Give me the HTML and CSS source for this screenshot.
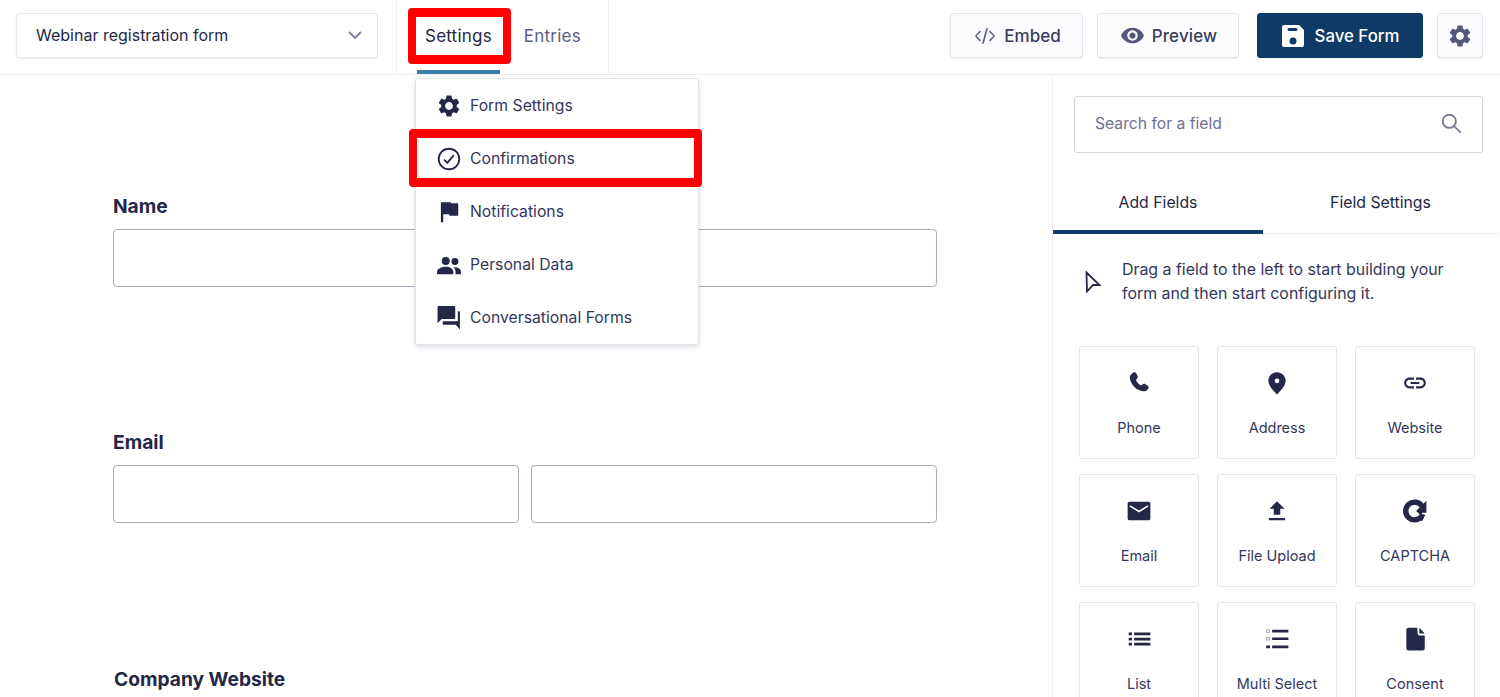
FILE: index.html
```html
<!DOCTYPE html>
<html lang="en">
<head>
<meta charset="utf-8">
<title>Webinar registration form</title>
<link rel="stylesheet" href="styles.css">
</head>
<body>
<svg class="defs" width="0" height="0" aria-hidden="true">
  <symbol id="gear" viewBox="0 0 24 24"><path d="M19.14 12.94c.04-.3.06-.61.06-.94 0-.32-.02-.64-.07-.94l2.03-1.58a.49.49 0 0 0 .12-.61l-1.92-3.32a.488.488 0 0 0-.59-.22l-2.39.96c-.5-.38-1.03-.7-1.62-.94l-.36-2.54a.484.484 0 0 0-.48-.41h-3.84c-.24 0-.43.17-.47.41l-.36 2.54c-.59.24-1.13.57-1.62.94l-2.39-.96c-.22-.08-.47 0-.59.22L2.74 8.87c-.12.21-.08.47.12.61l2.03 1.58c-.05.3-.09.63-.09.94s.02.64.07.94l-2.03 1.58a.49.49 0 0 0-.12.61l1.92 3.32c.12.22.37.29.59.22l2.39-.96c.5.38 1.03.7 1.62.94l.36 2.54c.05.24.24.41.48.41h3.84c.24 0 .44-.17.47-.41l.36-2.54c.59-.24 1.13-.56 1.62-.94l2.39.96c.22.08.47 0 .59-.22l1.92-3.32c.12-.22.07-.47-.12-.61l-2.01-1.58zM12 15.6c-1.98 0-3.6-1.62-3.6-3.6s1.62-3.6 3.6-3.6 3.6 1.62 3.6 3.6-1.62 3.6-3.6 3.6z"/></symbol>
</svg>
<header class="topbar">
  <div class="form-select"><span>Webinar registration form</span>
    <svg class="chev" viewBox="0 0 14 8"><path d="M1 1l6 6 6-6"/></svg>
  </div>
  <nav class="tabs">
    <a class="tab active">Settings</a>
    <a class="tab">Entries</a>
  </nav>
  <div class="actions">
    <button class="btn btn-embed"><svg class="ic-code" viewBox="0 0 24 24"><path d="M7.6 16.6 3 12l4.6-4.6L6.4 6 1 12l5.4 6zm8.800 0L21 12l-4.600-4.600L17.600 6 23 12l-5.400 6zM13.300 3.500h1.900L10.700 20.500H8.800z"/></svg>Embed</button>
    <button class="btn btn-preview"><svg class="ic-eye" viewBox="0 0 24 24"><path d="M12 4.500C7 4.500 2.730 7.610 1 12c1.730 4.390 6 7.500 11 7.500s9.270-3.110 11-7.500c-1.730-4.390-6-7.500-11-7.500zM12 17c-2.760 0-5-2.240-5-5s2.240-5 5-5 5 2.240 5 5-2.240 5-5 5zm0-8c-1.660 0-3 1.340-3 3s1.340 3 3 3 3-1.340 3-3-1.340-3-3-3z"/></svg>Preview</button>
    <button class="btn btn-save"><svg class="ic-save" viewBox="0 0 24 24"><path fill-rule="evenodd" d="M5 1h13l5 5v15a2 2 0 0 1-2 2H3a2 2 0 0 1-2-2V3a2 2 0 0 1 2-2zm3 3a1.500 1.500 0 0 0 0 3h7a1.500 1.500 0 0 0 0-3zm4 9.500a3.500 3.500 0 1 0 0 7 3.500 3.500 0 0 0 0-7z"/></svg>Save Form</button>
    <button class="btn btn-gear"><svg class="ic-gear"><use href="#gear"/></svg></button>
  </div>
</header>

<main class="layout">
  <section class="canvas">
    <div class="field field-name">
      <label class="field-label">Name</label>
      <div class="inputs"><div class="input"></div></div>
    </div>
    <div class="field field-email">
      <label class="field-label">Email</label>
      <div class="inputs"><div class="input"></div><div class="input"></div></div>
    </div>
    <div class="field field-web">
      <label class="field-label">Company Website</label>
    </div>
  </section>

  <aside class="sidebar">
    <div class="search"><span>Search for a field</span>
      <svg class="ic-search" viewBox="0 0 24 24"><circle cx="9.500" cy="9.500" r="7.500"/><path d="M15 15l7.500 7.500"/></svg>
    </div>
    <div class="side-tabs">
      <a class="side-tab active">Add Fields</a>
      <a class="side-tab">Field Settings</a>
    </div>
    <div class="hint">
      <svg class="ic-cursor" viewBox="0 0 16 22"><path d="M1.500 1.500L14.500 14H8L2 20.500z"/></svg>
      <p>Drag a field to the left to start building your form and then start configuring it.</p>
    </div>
    <div class="cards">
      <div class="card"><svg viewBox="0 0 24 24"><path d="M6.500 2.500c1-.8 2.300-.5 2.900.6l1.200 2.200c.5 1 .3 2-.5 2.700l-1 .9c.9 2.300 2.700 4.300 5 5.500l1.100-1c.8-.7 1.800-.8 2.700-.2l2.100 1.300c1 .7 1.200 2 .4 2.900l-.9 1c-1 1.100-2.400 1.500-3.800 1.100C9.500 18.900 4.900 14 3.600 7.800c-.3-1.400.1-2.800 1.200-3.800z"/></svg><span>Phone</span></div>
      <div class="card"><svg viewBox="0 0 24 24"><path d="M12 2C7.600 2 4 5.500 4 10c0 5.500 8 12.500 8 12.500S20 15.500 20 10c0-4.500-3.600-8-8-8zm0 10.200a2.200 2.200 0 1 1 0-4.400 2.200 2.200 0 0 1 0 4.400z"/></svg><span>Address</span></div>
      <div class="card"><svg viewBox="0 0 24 24"><path d="M3.900 12c0-1.710 1.390-3.100 3.100-3.100h4V7H7c-2.760 0-5 2.240-5 5s2.240 5 5 5h4v-1.900H7c-1.710 0-3.100-1.390-3.100-3.100zM8 13h8v-2H8v2zm9-6h-4v1.900h4c1.710 0 3.100 1.390 3.100 3.100s-1.390 3.100-3.100 3.100h-4V17h4c2.760 0 5-2.240 5-5s-2.240-5-5-5z"/></svg><span>Website</span></div>
      <div class="card"><svg viewBox="0 0 24 24"><path d="M3 3.500h18a1.500 1.500 0 0 1 1.500 1.500v14a1.500 1.500 0 0 1-1.500 1.500H3A1.500 1.500 0 0 1 1.500 19V5A1.500 1.500 0 0 1 3 3.500zm1 3.200-.8 1.200L12 13.300l8.800-5.400-.8-1.200-8 4.900z" fill-rule="evenodd"/></svg><span>Email</span></div>
      <div class="card"><svg viewBox="0 0 24 24"><path d="M9 15.500h6V10h4l-7-7-7 7h4zM4.500 18.500h15v2h-15z"/></svg><span>File Upload</span></div>
      <div class="card"><svg viewBox="0 0 24 24"><path class="ring" d="M18.500 7.500A8.200 8.200 0 1 0 18.500 16.500"/><path d="M22.500 2.500v9h-9zM13 12l5.500-4.500V11h4v2.500h-4V17zM17 14.500l4.500 1-3 6-4-3z"/></svg><span>CAPTCHA</span></div>
      <div class="card"><svg viewBox="0 0 24 24"><path d="M2.500 6h3v2.500h-3zM2.500 10.800h3v2.500h-3zM2.500 15.500h3V18h-3zM7.500 6h15v2.500h-15zM7.500 10.800h15v2.500h-15zM7.500 15.500h15V18h-15z"/></svg><span>List</span></div>
      <div class="card"><svg viewBox="0 0 24 24"><rect class="box" x="2.500" y="3.500" width="2.500" height="2.500"/><rect class="box" x="2.500" y="10.500" width="2.500" height="2.500"/><path d="M7.500 3.500h15v2.500h-15zM7.500 10.500h15v2.500h-15zM7.500 18h15v2.500h-15zM2 18h3.500v2.500H2z"/></svg><span>Multi Select</span></div>
      <div class="card"><svg viewBox="0 0 24 24"><path d="M6 1.500h8l.5 5.500a2 2 0 0 0 2 1.700H21V20.500a2 2 0 0 1-2 2H6a2 2 0 0 1-2-2v-17a2 2 0 0 1 2-2zM16 1.500l5 5.500h-5z"/></svg><span>Consent</span></div>
    </div>
  </aside>
</main>

<div class="menu">
  <a class="menu-item"><svg class="menu-ic"><use href="#gear"/></svg>Form Settings</a>
  <a class="menu-item"><svg class="menu-ic" viewBox="0 0 24 24"><circle class="outline" cx="12" cy="12" r="9.500"/><path class="outline" d="M7.500 12.500l3 3 6-7"/></svg>Confirmations</a>
  <a class="menu-item"><svg class="menu-ic" viewBox="0 0 24 24"><path d="M14 4 13.600 3H4.500V21.500h2.200V14h5.400l.4 1.500H20.500V4z"/></svg>Notifications</a>
  <a class="menu-item"><svg class="menu-ic" viewBox="0 0 24 24"><path d="M9 12a3.700 3.700 0 1 0 0-7.400A3.700 3.700 0 0 0 9 12zm8.500 0a3.200 3.200 0 1 0 0-6.400 3.200 3.200 0 0 0 0 6.400zM9 13.500c-3.300 0-8 1.600-8 4.500v2.500h15V18c0-2.900-3.700-4.500-7-4.500zm8.500.5c-.5 0-1 0-1.500.1 1.200 1 2 2.300 2 3.900v2.500h5v-2.300c0-2.700-3-4.200-5.500-4.200z"/></svg>Personal Data</a>
  <a class="menu-item"><svg class="menu-ic ic-forum" viewBox="0 0 24 24"><path d="M22 6h-2v9.500H5.500V18c0 .55.45 1 1 1H18l4 4.500V7c0-.55-.45-1-1-1zM17.500 12.500V2c0-.55-.45-1-1-1H1.500c-.55 0-1 .45-1 1v15.500l4-4h12c.55 0 1-.45 1-1z"/></svg>Conversational Forms</a>
</div>

<div class="mark mark-settings"></div>
<div class="mark mark-confirm"></div>
</body>
</html>
```

FILE: styles.css
```css
* { box-sizing: border-box; }
html, body { margin: 0; padding: 0; height: 697px; overflow: hidden; }
body {
  position: relative;
  background: #fff;
  font-family: "Inter", "Liberation Sans", sans-serif;
  color: #242748;
}
.defs { position: absolute; }
svg { display: block; fill: #242748; }

.topbar {
  height: 75px;
  display: flex;
  align-items: flex-start;
  border-bottom: 1px solid #ecedf2;
}
.form-select {
  width: 362px;
  height: 45px;
  margin: 13px 0 0 16px;
  padding: 0 15px 2px 19px;
  display: flex;
  align-items: center;
  justify-content: space-between;
  border: 1px solid #e4e5ec;
  border-radius: 3px;
  box-shadow: 0 1px 2px rgba(40, 44, 80, .08);
  font-size: 16px;
}
.chev { width: 14px; height: 8px; fill: none; stroke: #7b7e98; stroke-width: 1.800; }
.tabs {
  width: 213px;
  height: 74px;
  margin-left: 18px;
  padding-left: 20px;
  display: flex;
  gap: 16px;
  border-left: 1px solid #f0f1f4;
  border-right: 1px solid #f0f1f4;
}
.tab {
  height: 74px;
  padding: 2px 8px 0;
  display: flex;
  align-items: center;
  font-size: 17px;
  letter-spacing: .22px;
  color: #5b5e80;
  border-bottom: 4px solid transparent;
}
.tab.active { color: #242748; border-bottom-color: #3e7ea8; }
.actions {
  margin: 13px 17px 0 auto;
  display: flex;
  gap: 14px;
}
.btn {
  height: 45px;
  display: flex;
  align-items: center;
  justify-content: center;
  font: 500 17px "Inter", "Liberation Sans", sans-serif;
  letter-spacing: .15px;
  color: #3a3d5e;
  background: #fbfbfd;
  border: 1px solid #e4e5ec;
  border-radius: 3px;
  box-shadow: 0 1px 2px rgba(40, 44, 80, .08);
  padding: 0;
}
.btn-embed { width: 133px; gap: 8px; padding-left: 2px; letter-spacing: 0; }
.btn-preview { width: 142px; gap: 7px; padding-left: 1px; }
.btn-save { width: 166px; gap: 10px; margin-left: 4px; letter-spacing: 0; font-size: 16.800px; background: #103a66; border-color: #103a66; color: #fff; }
.btn-gear { width: 46px; }
.ic-code { width: 22px; height: 22px; fill: #5b5e80; }
.ic-eye { width: 25px; height: 25px; fill: #54577a; }
.ic-save { width: 24px; height: 24px; fill: #fff; }
.ic-gear { width: 26px; height: 26px; fill: #54577a; }

.layout {
  height: 622px;
  display: flex;
}
.canvas {
  width: 1053px;
  padding: 0 116px 0 113px;
}
.field-label {
  display: block;
  font-size: 19.200px;
  font-weight: 700;
  line-height: 24px;
}
.field-name { padding-top: 119px; }
.field-email { padding-top: 143px; }
.field-web { padding-top: 144px; padding-left: 1px; }
.inputs { display: flex; gap: 12px; margin-top: 11px; }
.input {
  flex: 1;
  height: 58px;
  border: 1px solid #a9abbd;
  border-radius: 4px;
  background: #fff;
}

.sidebar {
  width: 447px;
  margin-left: -1px;
  border-left: 1px solid #eeeff3;
  padding-top: 21px;
}
.search {
  width: 409px;
  height: 57px;
  margin-left: 21px;
  padding: 0 20px 2px 20px;
  display: flex;
  align-items: center;
  justify-content: space-between;
  border: 1px solid #d5d6e0;
  border-radius: 3px;
  font-size: 15.700px;
  color: #6e7090;
}
.ic-search { width: 21px; height: 21px; fill: none; stroke: #7d7f9a; stroke-width: 2.200; }
.side-tabs {
  display: flex;
  height: 62px;
  margin-top: 19px;
  border-bottom: 1px solid #eceef2;
}
.side-tab {
  width: 235px;
  height: 62px;
  display: flex;
  align-items: center;
  justify-content: center;
  padding-top: 2px;
  font-size: 15.800px;
  border-bottom: 4px solid transparent;
}
.side-tab.active { width: 210px; border-bottom-color: #103a66; }
.hint {
  display: flex;
  align-items: center;
  padding: 24px 20px 0 32px;
  gap: 21px;
}
.hint p { margin: 0; font-size: 15.900px; line-height: 24px; width: 340px; color: #34375a; }
.ic-cursor { width: 16px; height: 22px; flex: none; fill: #fff; stroke: #242748; stroke-width: 1.800; }
.cards {
  display: grid;
  grid-template-columns: repeat(3, 120px);
  grid-auto-rows: 113px;
  column-gap: 18px;
  row-gap: 15px;
  margin: 40px 0 0 26px;
}
.card {
  display: flex;
  flex-direction: column;
  align-items: center;
  padding-top: 23px;
  border: 1px solid #e4e5ee;
  border-radius: 3px;
  font-size: 14.500px;
  color: #34375a;
}
.card svg { width: 26px; height: 26px; margin-bottom: 20.400px; }
.card span { line-height: 24px; }
.card .box { fill: none; stroke: #9a9cb2; stroke-width: .8; }
.card .ring { fill: none; stroke: #242748; stroke-width: 5; }

.menu {
  position: absolute;
  left: 415px;
  top: 78px;
  width: 284px;
  height: 267px;
  display: flex;
  flex-direction: column;
  background: #fff;
  border: 1px solid #e2e3ea;
  border-radius: 3px;
  box-shadow: 0 2px 5px rgba(40, 44, 80, .16);
}
.menu-item {
  height: 53.400px;
  padding-left: 20px;
  display: flex;
  align-items: center;
  gap: 8px;
  font-size: 15.750px;
  color: #34375a;
}
.menu-ic { width: 26px; height: 26px; }
.ic-forum { width: 25px; height: 25px; margin-left: 1px; }
.menu-ic .outline { fill: none; stroke: #242748; stroke-width: 1.700; }

.mark {
  position: absolute;
  border-style: solid;
  border-color: #f00;
  border-width: 9px 8px;
  border-radius: 4px;
}
.mark-settings { left: 408px; top: 8px; width: 103px; height: 56px; }
.mark-confirm { left: 409px; top: 129px; width: 293px; height: 58px; }
```
